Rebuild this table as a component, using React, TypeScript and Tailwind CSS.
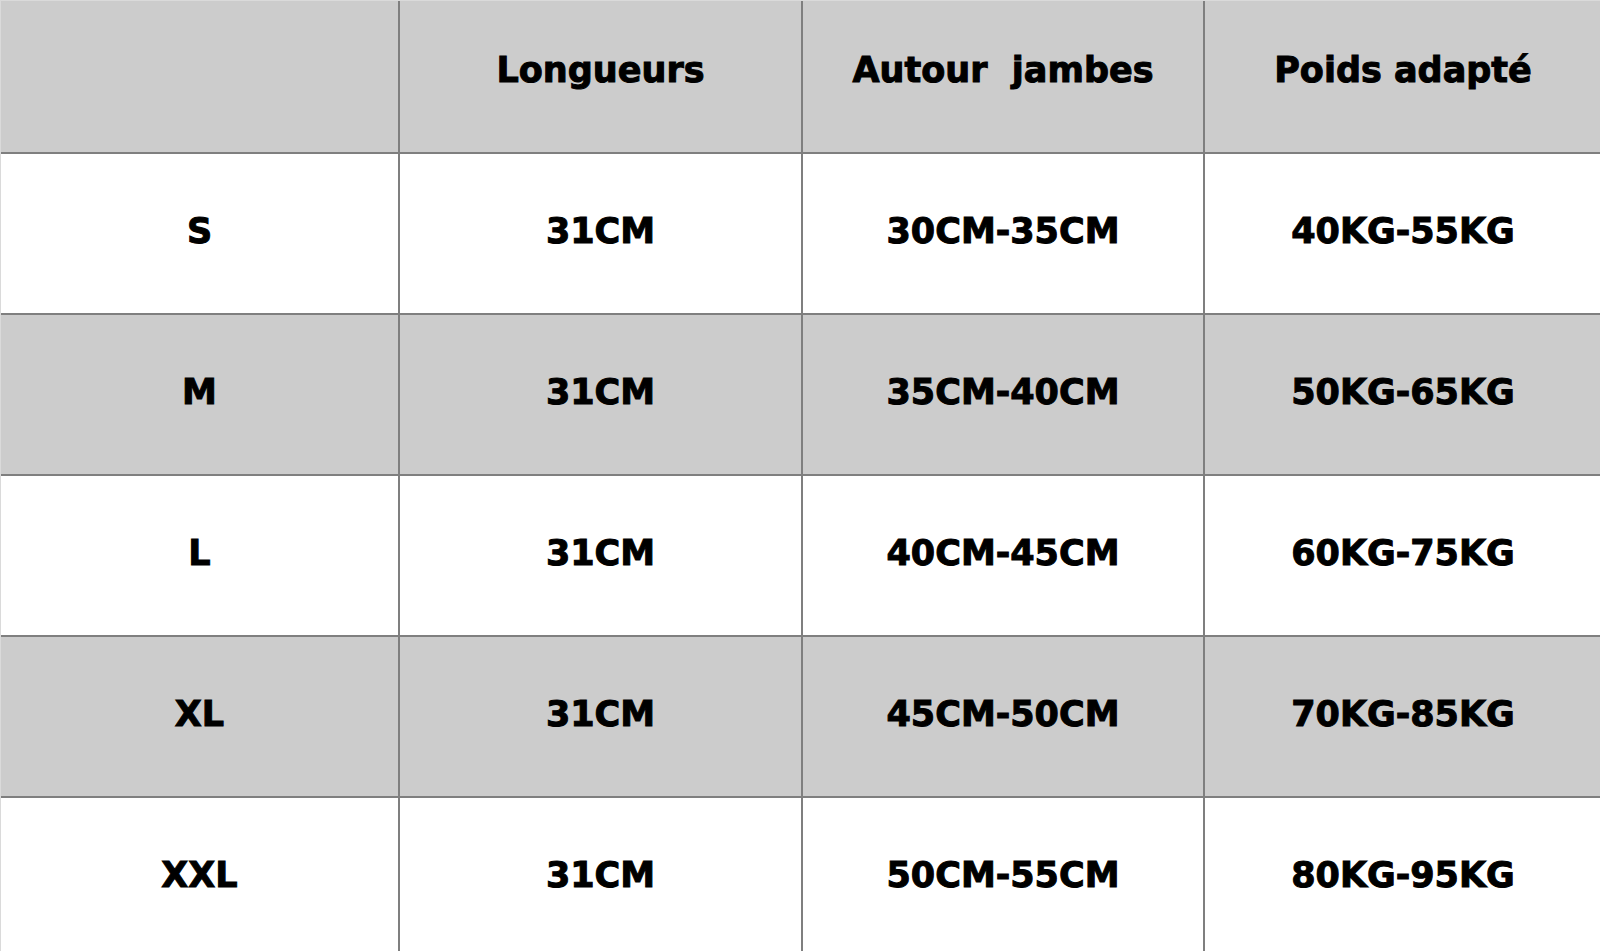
const headers = ['', 'Longueurs', 'Autour  jambes', 'Poids adapté']

const rows = [
  ['S', '31CM', '30CM-35CM', '40KG-55KG'],
  ['M', '31CM', '35CM-40CM', '50KG-65KG'],
  ['L', '31CM', '40CM-45CM', '60KG-75KG'],
  ['XL', '31CM', '45CM-50CM', '70KG-85KG'],
  ['XXL', '31CM', '50CM-55CM', '80KG-95KG'],
]

const colBorder = ['border-r-2', 'border-r-2', 'border-r-2', '']

export default function App() {
  return (
    <div
      className="h-[951px] w-[1600px] overflow-hidden bg-white text-black"
      style={{ fontFamily: '"DejaVu Sans", Verdana, sans-serif' }}
    >
      <div className="grid grid-cols-[399px_403px_402px_396px] border-t border-l border-r border-[#dadada]">
        {headers.map((h, i) => (
          <div
            key={'h' + i}
            className={`flex h-[153px] items-center justify-center whitespace-pre border-b-2 border-[#7f7f7f] bg-[#cccccc] pb-[12px] text-[35px] font-bold [-webkit-text-stroke:1px_#000] ${colBorder[i]}`}
          >
            {h}
          </div>
        ))}
        {rows.map((row, r) =>
          row.map((cell, i) => (
            <div
              key={r + '-' + i}
              className={`flex h-[161px] items-center justify-center border-b-2 border-[#7f7f7f] pb-[5px] text-[35px] font-bold [-webkit-text-stroke:1px_#000] ${colBorder[i]} ${
                r % 2 === 1 ? 'bg-[#cccccc]' : 'bg-white'
              }`}
            >
              {cell}
            </div>
          ))
        )}
      </div>
    </div>
  )
}
